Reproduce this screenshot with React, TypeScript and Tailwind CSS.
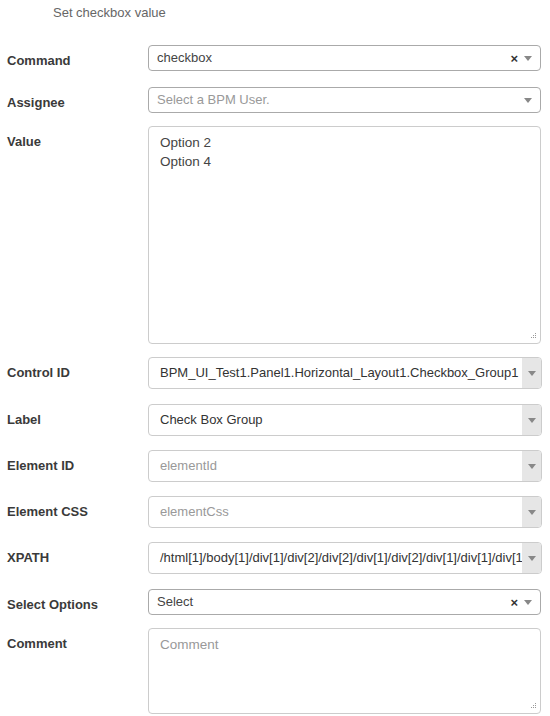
const font = "font-['Liberation_Sans',Arial,sans-serif]";

function Arrow({ className = "" }: { className?: string }) {
  return (
    <svg width="8" height="5" viewBox="0 0 8 5" className={className}>
      <path d="M0 0h8L4 5z" fill="#888" />
    </svg>
  );
}

function Row({
  label,
  top,
  children,
}: {
  label: string;
  top: string;
  children: React.ReactNode;
}) {
  return (
    <div className={`flex items-start ${top}`}>
      <div className="w-[148px] shrink-0 pl-[7px] pt-[8px] text-[13px] font-bold leading-[16px] text-[#3a3a3a]">
        {label}
      </div>
      <div className="w-[394px]">{children}</div>
    </div>
  );
}

// select2-like dropdown (Command, Assignee, Select Options)
function Select2({
  value,
  placeholder,
  clearable = false,
}: {
  value?: string;
  placeholder?: string;
  clearable?: boolean;
}) {
  return (
    <div className="flex h-[26px] w-[393px] items-center rounded-[4px] border border-[#aaa] bg-white px-[8px]">
      <span
        className={`flex-1 truncate text-[13px] ${value ? "text-[#444]" : "text-[#999]"}`}
      >
        {value ?? placeholder}
      </span>
      {clearable && (
        <span className="mr-[6px] text-[13px] font-bold leading-none text-[#333]">×</span>
      )}
      <Arrow />
    </div>
  );
}

// bootstrap-like combo with a grey toggle on the right
function Combo({ value, placeholder }: { value?: string; placeholder?: string }) {
  return (
    <div className="flex h-[32px] w-[394px] overflow-hidden rounded-[4px] border border-[#ccc] bg-white">
      <span
        className={`min-w-0 flex-1 overflow-hidden whitespace-nowrap pl-[11px] text-[13px] leading-[30px] ${
          value ? "text-[#333]" : "text-[#999]"
        }`}
      >
        {value ?? placeholder}
      </span>
      <span className="flex w-[19px] shrink-0 items-center justify-center bg-[#e6e6e6]">
        <Arrow />
      </span>
    </div>
  );
}

function Grip() {
  return (
    <svg width="7" height="7" viewBox="0 0 7 7" className="absolute bottom-[3px] right-[3px]">
      <g fill="#999">
        <rect x="5" y="0" width="1" height="1" />
        <rect x="3" y="2" width="1" height="1" />
        <rect x="5" y="2" width="1" height="1" />
        <rect x="1" y="4" width="1" height="1" />
        <rect x="3" y="4" width="1" height="1" />
        <rect x="5" y="4" width="1" height="1" />
      </g>
    </svg>
  );
}

function Area({ h, children }: { h: string; children: React.ReactNode }) {
  return (
    <div
      className={`relative ${h} w-[393px] rounded-[4px] border border-[#ccc] bg-white px-[11px] pt-[6px] text-[13.5px] leading-[19px]`}
    >
      {children}
      <Grip />
    </div>
  );
}

export default function App() {
  return (
    <div className={`${font} min-h-[716px] w-[550px] bg-white`}>
      <div className="pl-[53px] pt-[5px] text-[13px] leading-[16px] text-[#666]">
        Set checkbox value
      </div>

      <Row label="Command" top="mt-[24px]">
        <Select2 value="checkbox" clearable />
      </Row>
      <Row label="Assignee" top="mt-[16px]">
        <Select2 placeholder="Select a BPM User." />
      </Row>
      <Row label="Value" top="mt-[13px]">
        <Area h="h-[218px]">
          <div className="text-[#444]">Option 2</div>
          <div className="text-[#444]">Option 4</div>
        </Area>
      </Row>
      <Row label="Control ID" top="mt-[13px]">
        <Combo value="BPM_UI_Test1.Panel1.Horizontal_Layout1.Checkbox_Group1" />
      </Row>
      <Row label="Label" top="mt-[15px]">
        <Combo value="Check Box Group" />
      </Row>
      <Row label="Element ID" top="mt-[14px]">
        <Combo placeholder="elementId" />
      </Row>
      <Row label="Element CSS" top="mt-[14px]">
        <Combo placeholder="elementCss" />
      </Row>
      <Row label="XPATH" top="mt-[14px]">
        <Combo value="/html[1]/body[1]/div[1]/div[2]/div[2]/div[1]/div[2]/div[1]/div[1]/div[1]" />
      </Row>
      <Row label="Select Options" top="mt-[15px]">
        <Select2 value="Select" clearable />
      </Row>
      <Row label="Comment" top="mt-[13px]">
        <Area h="h-[86px]">
          <div className="text-[#999]">Comment</div>
        </Area>
      </Row>
    </div>
  );
}
